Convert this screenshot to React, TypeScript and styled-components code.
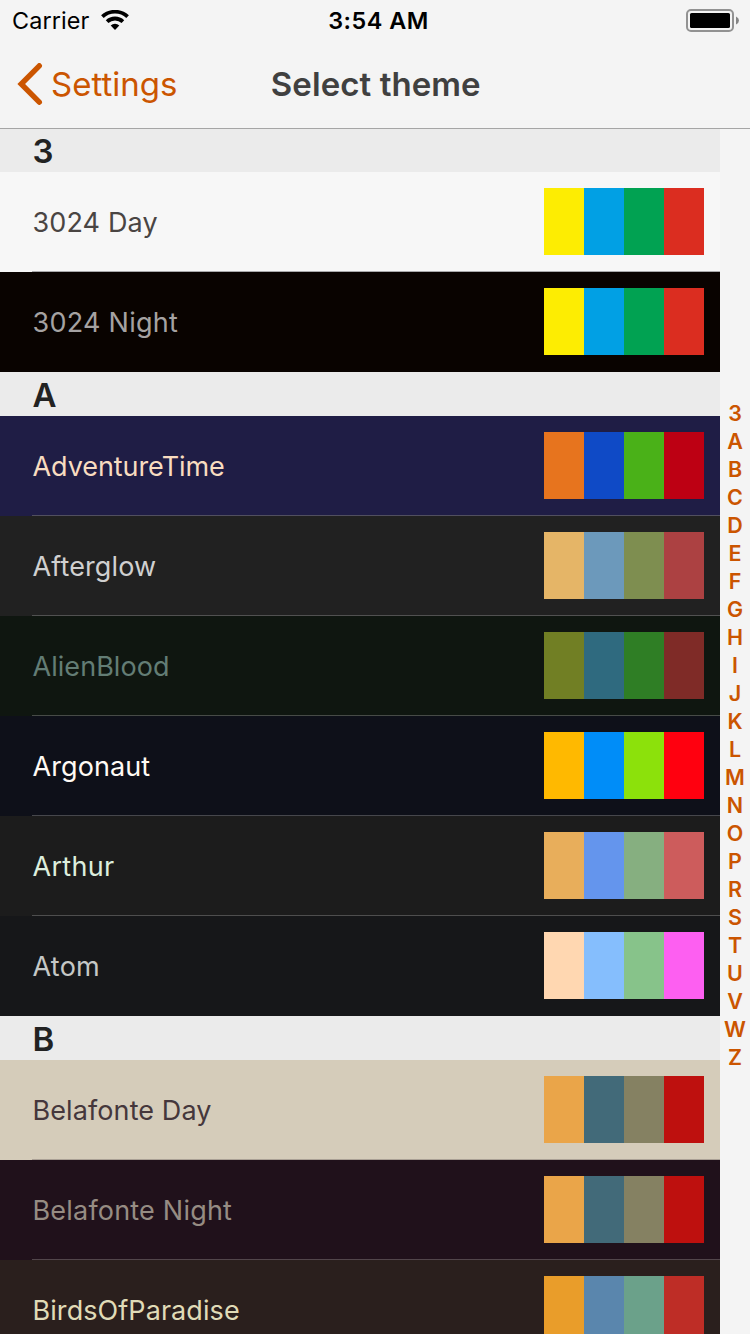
import React from 'react';
import styled, { createGlobalStyle } from 'styled-components';

const GlobalStyle = createGlobalStyle`
  *, *::before, *::after { box-sizing: border-box; }
  body {
    margin: 0;
    background: #f4f4f4;
    font-family: Inter, "Liberation Sans", sans-serif;
  }
`;

const Screen = styled.div`
  width: 750px;
  height: 1334px;
  overflow: hidden;
  display: flex;
  flex-direction: column;
  background: #f4f4f4;
`;

const StatusBar = styled.div`
  height: 40px;
  flex: none;
  display: grid;
  grid-template-columns: 1fr auto 1fr;
  align-items: center;
  padding: 0 10px 0 12px;
  color: #000;
  font-size: 23.4px;
  line-height: 38px;
`;

const Carrier = styled.div`
  display: flex;
  align-items: center;
  gap: 11.3px;
  letter-spacing: 0.12px;

  span { padding-top: 2px; }
`;

const Clock = styled.div`
  padding: 2px 0 0 5px;
  font-weight: 600;
  letter-spacing: 0.5px;
`;

const BatteryIcon = styled.svg`
  justify-self: end;
  display: block;
`;

const NavBar = styled.div`
  height: 89px;
  flex: none;
  display: grid;
  grid-template-columns: 1fr auto 1fr;
  align-items: center;
  padding: 0 16px;
  border-bottom: 1px solid #a5a5a5;
  font-size: 33px;
  line-height: 88px;
`;

const BackButton = styled.div`
  display: flex;
  align-items: center;
  gap: 8px;
  color: #cb5500;
`;

const Title = styled.div`
  padding-left: 1.5px;
  color: #404040;
  font-weight: 600;
  letter-spacing: 0.08px;
`;

const Content = styled.div`
  flex: 1;
  min-height: 0;
  display: flex;
`;

const ThemeList = styled.div`
  width: 720px;
  overflow: hidden;
`;

const SectionHeader = styled.div<{ $height: number }>`
  height: ${(p) => p.$height}px;
  padding-left: 32.6px;
  background: #ebebeb;
  color: #222;
  font-size: 33px;
  font-weight: 600;
  line-height: ${(p) => p.$height + 2}px;
`;

const Row = styled.div<{ $bg: string }>`
  height: 100px;
  padding-left: 32px;
  background: ${(p) => p.$bg};
`;

const RowBody = styled.div<{ $line: string }>`
  height: 100px;
  display: flex;
  justify-content: space-between;
  align-items: flex-start;
  padding: 16px 16px 0 0.5px;
  border-bottom: 1px solid ${(p) => p.$line};
`;

const Name = styled.div<{ $color: string; $spacing: number }>`
  color: ${(p) => p.$color};
  font-size: 27px;
  line-height: 70px;
  letter-spacing: ${(p) => p.$spacing}px;
`;

const Palette = styled.div`
  display: flex;
`;

const Swatch = styled.div<{ $color: string }>`
  width: 40px;
  height: 67px;
  background: ${(p) => p.$color};
`;

const IndexBar = styled.div`
  width: 30px;
  padding-top: 270px;
  display: flex;
  flex-direction: column;
  align-items: center;
  color: #cb5500;
  font-size: 21.5px;
  font-weight: 600;
  line-height: 28px;
`;

interface Theme {
  name: string;
  bg: string;
  fg: string;
  line: string;
  spacing: number;
  colors: string[];
}

const theme = (name: string, bg: string, fg: string, line: string, spacing: number, ...colors: string[]): Theme => ({
  name, bg, fg, line, spacing, colors,
});

const sections = [
  {
    letter: '3',
    height: 43,
    themes: [
      theme('3024 Day', '#f7f7f7', '#4a4543', '#a9a9ab', 0.12, '#fded02', '#01a0e4', '#01a252', '#db2d20'),
      theme('3024 Night', '#090300', '#a5a2a2', 'transparent', 0.25, '#fded02', '#01a0e4', '#01a252', '#db2d20'),
    ],
  },
  {
    letter: 'A',
    height: 44,
    themes: [
      theme('AdventureTime', '#1f1d45', '#f8dcc0', '#514f5f', -0.07, '#e7741e', '#0f4ac6', '#4ab118', '#bd0013'),
      theme('Afterglow', '#212121', '#d0d0d0', '#515151', 0.12, '#e5b567', '#6c99bb', '#7e8e50', '#ac4142'),
      theme('AlienBlood', '#0f1610', '#637d75', '#474b47', 0.05, '#717f24', '#2f6a7f', '#2f7e25', '#7f2b27'),
      theme('Argonaut', '#0e1019', '#fffaf4', '#46474c', 0.1, '#ffb900', '#008df8', '#8ce10b', '#ff000f'),
      theme('Arthur', '#1c1c1c', '#ddeedd', '#4e4e4e', 0.3, '#e8ae5b', '#6495ed', '#86af80', '#cd5c5c'),
      theme('Atom', '#161719', '#c5c8c6', 'transparent', 0.25, '#ffd7b1', '#85befd', '#87c38a', '#fd5ff1'),
    ],
  },
  {
    letter: 'B',
    height: 44,
    themes: [
      theme('Belafonte Day', '#d5ccba', '#45373c', '#aaa095', 0.1, '#eaa549', '#426a79', '#858162', '#be100e'),
      theme('Belafonte Night', '#20111b', '#968c83', '#52464b', 0.2, '#eaa549', '#426a79', '#858162', '#be100e'),
      theme('BirdsOfParadise', '#2a1f1d', '#e0dbb7', '#534b49', 0.07, '#e99d2a', '#5a86ad', '#6ba18a', '#be2d26'),
    ],
  },
];

const WifiIcon = () => (
  <svg width="28" height="20" viewBox="0 0 28 20">
    <g fill="none" stroke="#000" strokeWidth="3.8">
      <path d="M1.4 6.7 A18.4 18.4 0 0 1 26.6 6.7" />
      <path d="M6.1 11.7 A11.4 11.4 0 0 1 21.9 11.7" />
    </g>
    <path d="M9.7 15.5 A6.4 6.4 0 0 1 18.3 15.5 L14 19.9 Z" fill="#000" />
  </svg>
);

const Chevron = () => (
  <svg width="27" height="42" viewBox="0 0 27 42">
    <path d="M23.3 2.8 L5.2 21 L23.3 39.2" fill="none" stroke="#cb5500" strokeWidth="5.4" strokeLinecap="round" strokeLinejoin="miter" />
  </svg>
);

export default function App() {
  return (
    <Screen>
      <GlobalStyle />
      <StatusBar>
        <Carrier>
          <span>Carrier</span>
          <WifiIcon />
        </Carrier>
        <Clock>3:54 AM</Clock>
        <BatteryIcon width="54" height="24" viewBox="0 0 54 24">
          <rect x="1" y="2" width="46" height="21" rx="4" fill="none" stroke="#929292" strokeWidth="2" />
          <rect x="4" y="5" width="40" height="15" rx="1.6" fill="#000" />
          <path d="M50 8.5 Q53 10 53 12.5 Q53 15 50 16.5 Z" fill="#858585" />
        </BatteryIcon>
      </StatusBar>
      <NavBar>
        <BackButton>
          <Chevron />
          <span>Settings</span>
        </BackButton>
        <Title>Select theme</Title>
      </NavBar>
      <Content>
        <ThemeList>
          {sections.map((s) => (
            <section key={s.letter}>
              <SectionHeader $height={s.height}>{s.letter}</SectionHeader>
              {s.themes.map((t) => (
                <Row key={t.name} $bg={t.bg}>
                  <RowBody $line={t.line}>
                    <Name $color={t.fg} $spacing={t.spacing}>{t.name}</Name>
                    <Palette>
                      {t.colors.map((c, i) => (
                        <Swatch key={i} $color={c} />
                      ))}
                    </Palette>
                  </RowBody>
                </Row>
              ))}
            </section>
          ))}
        </ThemeList>
        <IndexBar>
          {'3ABCDEFGHIJKLMNOPRSTUVWZ'.split('').map((c) => (
            <span key={c}>{c}</span>
          ))}
        </IndexBar>
      </Content>
    </Screen>
  );
}
